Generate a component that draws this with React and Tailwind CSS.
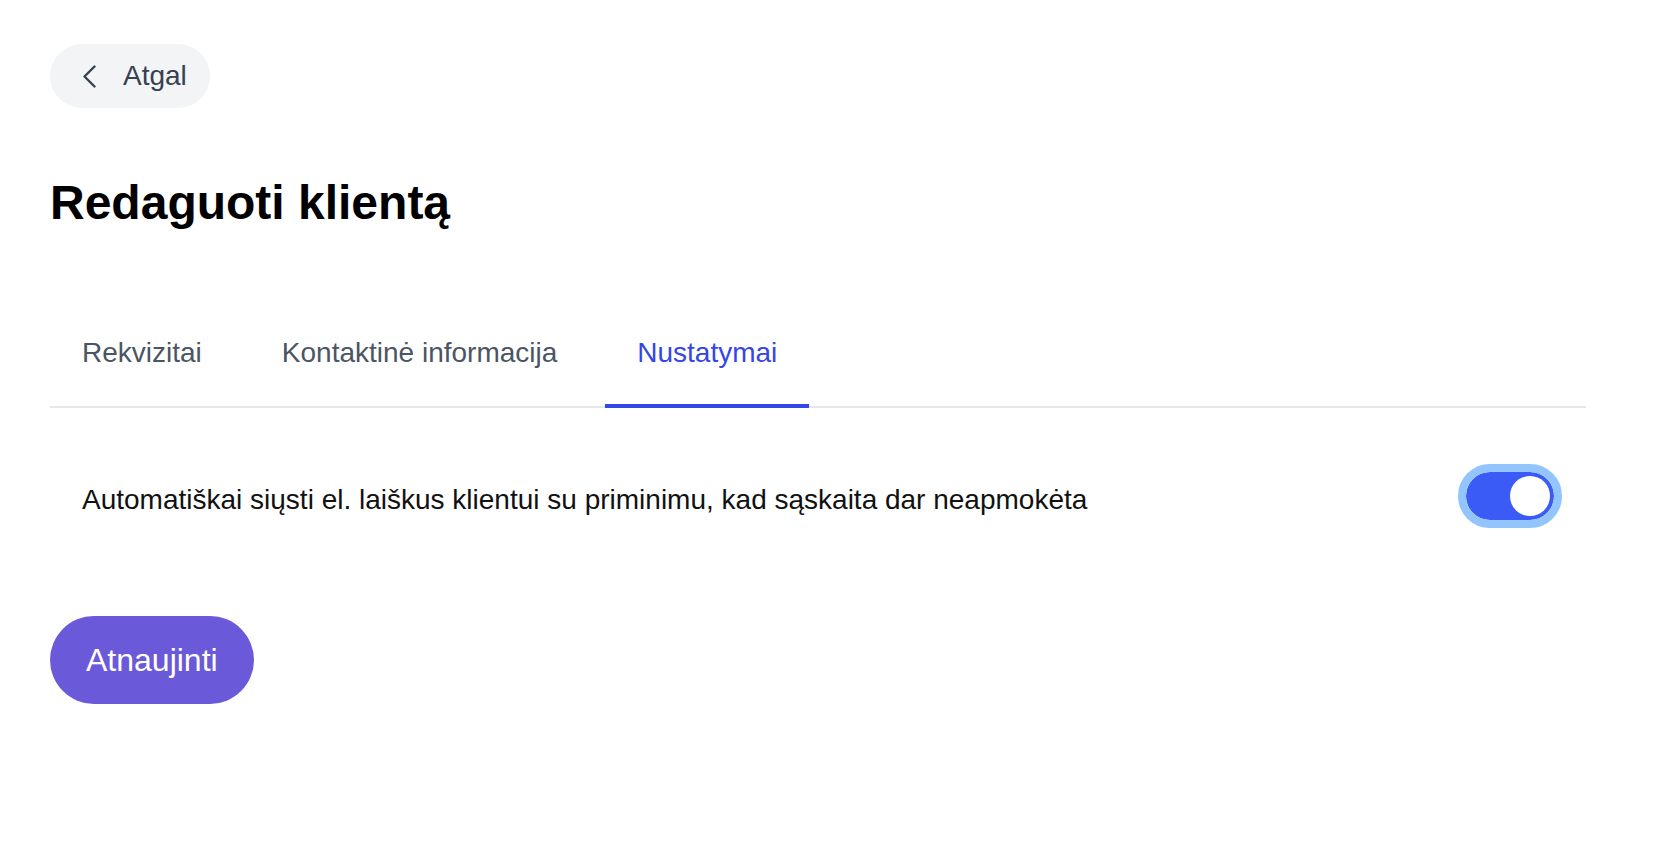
import { useState } from 'react';

const tabs = ['Rekvizitai', 'Kontaktinė informacija', 'Nustatymai'];

export default function App() {
  const [active, setActive] = useState(2);
  const [enabled, setEnabled] = useState(true);

  return (
    <div className="min-h-screen bg-white px-[50px] pt-[44px] font-['Liberation_Sans',Arial,sans-serif]">
      <div className="w-[1536px]">
        {/* Back */}
        <button className="flex h-[64px] w-[160px] items-center gap-[27px] rounded-full bg-[#f3f4f6] pl-[33px] text-[28px] leading-none text-[#374151]">
          <svg width="13" height="23" viewBox="0 0 13 23" fill="none" className="shrink-0">
            <path d="M11.5 1.5 L1.5 11.5 L11.5 21.5" stroke="#374151" strokeWidth="2.4" strokeLinecap="round" strokeLinejoin="round" />
          </svg>
          <span>Atgal</span>
        </button>

        <h1 className="mt-[71px] text-[48px] font-bold leading-none text-black">Redaguoti klientą</h1>

        {/* Tabs */}
        <div className="mt-[76px] flex gap-4 border-b-2 border-[#e5e7eb]">
          {tabs.map((t, i) => (
            <button
              key={t}
              onClick={() => setActive(i)}
              className={`-mb-[2px] border-b-4 px-8 pt-[36px] pb-[37px] text-[28px] leading-none ${
                active === i ? 'border-[#3546e6] text-[#3546e6]' : 'border-transparent text-[#4b5563]'
              }`}
            >
              {t}
            </button>
          ))}
        </div>

        {/* Setting row */}
        <div className="mt-[64px] flex items-center justify-between px-8">
          <span className="pt-[8px] text-[28px] leading-none text-[#111111]">
            Automatiškai siųsti el. laiškus klientui su priminimu, kad sąskaita dar neapmokėta
          </span>
          <button
            onClick={() => setEnabled(!enabled)}
            className={`flex h-[48px] w-[88px] items-center rounded-full p-[4px] outline-[8px] outline-solid outline-[#93c5fd] ${
              enabled ? 'justify-end bg-[#3b5bf6]' : 'justify-start bg-[#d1d5db]'
            }`}
          >
            <span className="h-[40px] w-[40px] rounded-full bg-white" />
          </button>
        </div>

        <button className="mt-[96px] h-[88px] rounded-full bg-[#6a59d8] px-[36px] text-[32px] leading-none text-white">
          Atnaujinti
        </button>
      </div>
    </div>
  );
}
